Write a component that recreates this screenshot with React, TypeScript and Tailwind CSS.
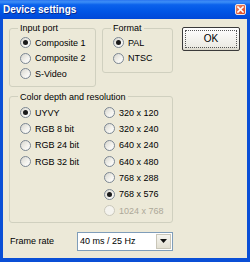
import React from 'react';

type RadioProps = { label: string; checked?: boolean; disabled?: boolean; tall?: boolean };

function Radio({ label, checked, disabled, tall }: RadioProps) {
  return (
    <div className={`flex items-center pl-[2px] ${tall ? 'h-[16.33px]' : 'h-[15.5px]'}`}>
      <span
        className={`flex h-[11px] w-[11px] shrink-0 items-center justify-center rounded-full border ${
          disabled
            ? 'border-[#CAC8BB] bg-[#F4F3EE]'
            : 'border-[#7C8793] bg-[linear-gradient(135deg,#D6D5CE_0%,#F2F1EC_55%,#FFFFFF_100%)]'
        }`}
      >
        {checked && <span className="h-[5px] w-[5px] rounded-full bg-[#1A1A1A]" />}
      </span>
      <span className={`ml-[4px] whitespace-nowrap ${disabled ? 'text-[#ACA899]' : 'text-black'}`}>{label}</span>
    </div>
  );
}

export default function App() {
  return (
    <div className="flex h-[262px] w-[250px] flex-col bg-[#0A4FD6] font-['Liberation_Sans',Arial,sans-serif] text-[9px] leading-[12px] text-black">
      {/* Title bar */}
      <div className="flex h-[19px] shrink-0 items-center justify-between bg-[linear-gradient(to_bottom,#2A74F0_0%,#3D8FF7_10%,#0B62EC_25%,#0055E5_60%,#0048D8_100%)] pl-[3px] pr-[4px]">
        <span className="text-[10px] font-bold leading-[12px] text-white [text-shadow:1px_1px_0_#0B2C8C]">Device settings</span>
        <span className="flex h-[11px] w-[11px] items-center justify-center rounded-[2px] border border-[#F3E6E0] bg-[linear-gradient(135deg,#F08A6A,#D9431E)]">
          <svg width="7" height="7" viewBox="0 0 7 7">
            <path d="M1 1L6 6M6 1L1 6" stroke="#FFFFFF" strokeWidth="1.6" strokeLinecap="square" />
          </svg>
        </span>
      </div>

      {/* Body */}
      <div className="mx-[3px] mb-[4px] flex flex-1 flex-col bg-[#ECE9D8] pl-[6px] pt-[3px]">
        <div className="flex items-start">
          <fieldset className="w-[87px] rounded-[3px] border border-[#D0D0BF] pb-[4px] pl-[8px] pt-[1px]">
            <legend className="px-[2px] leading-[12px]">Input port</legend>
            <Radio label="Composite 1" checked />
            <Radio label="Composite 2" />
            <Radio label="S-Video" />
          </fieldset>

          <fieldset className="ml-[6px] w-[71px] rounded-[3px] border border-[#D0D0BF] pb-[6px] pl-[8px] pt-[1px]">
            <legend className="px-[2px] leading-[12px]">Format</legend>
            <Radio label="PAL" checked />
            <Radio label="NTSC" />
          </fieldset>

          <button className="ml-[9px] mt-[5px] flex h-[24px] w-[58px] items-center justify-center rounded-[2px] border border-[#3A3A3A] bg-[linear-gradient(to_bottom,#FFFFFF,#ECEBE4_85%,#D8D5C8)] p-[2px]">
            <span className="flex h-full w-full items-center justify-center border border-dotted border-[#555555] text-[10px] text-black">
              OK
            </span>
          </button>
        </div>

        <fieldset className="mt-[4px] w-[164px] rounded-[3px] border border-[#D0D0BF] pb-[3px] pl-[8px] pt-[2px]">
          <legend className="px-[2px] leading-[12px]">Color depth and resolution</legend>
          <div className="flex">
            <div className="flex w-[84px] flex-col">
              <Radio label="UYVY" checked tall />
              <Radio label="RGB 8 bit" tall />
              <Radio label="RGB 24 bit" tall />
              <Radio label="RGB 32 bit" tall />
            </div>
            <div className="flex flex-col">
              <Radio label="320 x 120" tall />
              <Radio label="320 x 240" tall />
              <Radio label="640 x 240" tall />
              <Radio label="640 x 480" tall />
              <Radio label="768 x 288" tall />
              <Radio label="768 x 576" checked tall />
              <Radio label="1024 x 768" disabled tall />
            </div>
          </div>
        </fieldset>

        <div className="mt-[9px] flex items-center pl-[1px]">
          <span className="w-[67px]">Frame rate</span>
          <div className="flex h-[19px] w-[96px] items-center border border-[#7F9DB9] bg-white p-[1px]">
            <span className="flex-1 pl-[1px]">40 ms / 25 Hz</span>
            <span className="flex h-full w-[15px] items-center justify-center border border-[#C9C6B8] bg-[linear-gradient(to_bottom,#F6F5F0,#E3E0D2)]">
              <svg width="7" height="4" viewBox="0 0 7 4">
                <path d="M0 0H7L3.5 4Z" fill="#111111" />
              </svg>
            </span>
          </div>
        </div>
      </div>
    </div>
  );
}
